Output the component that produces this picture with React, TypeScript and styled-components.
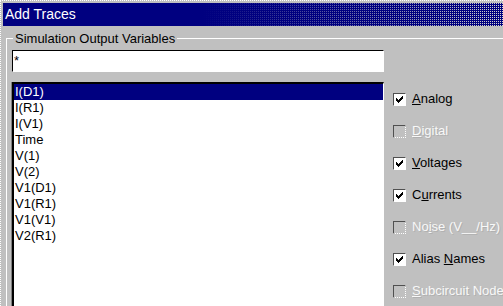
import React from 'react'
import styled, { createGlobalStyle } from 'styled-components';

const GlobalStyle = createGlobalStyle`
    html, body {
        margin: 0;
        background: #c0c0c0;
        overflow: hidden;
    }
`

const Window = styled.div`
    box-sizing: border-box;
    width: 503px;
    height: 306px;
    overflow: hidden;
    border-top: 1px dotted #ffffff;
    border-left: 1px dotted #ffffff;
    padding: 2px 0 0 2px;
    background: #c0c0c0;
    font-family: "Liberation Sans", Arial, sans-serif;
`

// navy caption fading into a dithered dot pattern on the right
const TitleBar = styled.div`
    height: 23px;
    line-height: 23px;
    padding-left: 2px;
    font-size: 14px;
    color: #ffffff;
    white-space: nowrap;
    background-color: #000080;
    background-image:
        linear-gradient(to right, #000080 40%, rgba(0, 0, 128, 0.05) 100%),
        repeating-linear-gradient(to bottom, rgba(0, 0, 128, 0) 0px, rgba(0, 0, 128, 0) 1px, #000080 1px, #000080 2px),
        repeating-linear-gradient(to right, #000080 0px, #000080 1px, #e6e6d2 1px, #e6e6d2 2px);
`

const Group = styled.fieldset`
    margin: 5px 0 0 3px;
    padding: 4px 0 0 5px;
    min-inline-size: 0;
    border: 0;
    border-top: 1px solid #ffffff;
    border-left: 1px solid #ffffff;
`

const GroupLabel = styled.legend`
    margin-left: 1px;
    padding: 0 2px;
    font-size: 13px;
    line-height: 15px;
    color: #000000;
`

const Columns = styled.div`
    display: flex;
`

const LeftColumn = styled.div`
    display: flex;
    flex-direction: column;
    width: 372px;
    flex-shrink: 0;
`

const FilterInput = styled.input`
    box-sizing: border-box;
    width: 372px;
    height: 22px;
    margin: 0;
    padding: 0 0 2px 1px;
    border: 0;
    border-top: 1px solid #000000;
    border-left: 1px solid #000000;
    border-right: 1px dotted #ffffff;
    border-bottom: 1px dotted #ffffff;
    background: #ffffff;
    font-family: inherit;
    font-size: 13px;
    color: #000000;
    outline: none;
`

const VarList = styled.ul`
    box-sizing: border-box;
    list-style: none;
    margin: 10px 0 0;
    padding: 0;
    height: 240px;
    background: #ffffff;
    border-top: 2px solid #000000;
    border-left: 2px solid #000000;
    border-right: 1px dotted #ffffff;
    box-shadow: -1px 0 0 #808080;
`

const VarItem = styled.li<{ $selected?: boolean }>`
    height: 16px;
    line-height: 16px;
    padding-left: 1px;
    font-size: 13px;
    white-space: nowrap;
    background: ${p => p.$selected ? '#000080' : 'transparent'};
    color: ${p => p.$selected ? '#ffffff' : '#000000'};
`

const OptionColumn = styled.div`
    display: flex;
    flex-direction: column;
    padding: 32px 0 0 9px;
`

const OptionRow = styled.label<{ $disabled?: boolean }>`
    display: flex;
    align-items: center;
    gap: 6px;
    height: 32px;
    font-size: 13px;
    white-space: nowrap;
    color: ${p => p.$disabled ? '#f8f8f8' : '#000000'};
    text-shadow: ${p => p.$disabled ? '1px 1px 0 #b0b0b0' : 'none'};
`

const Box = styled.span<{ $disabled?: boolean }>`
    box-sizing: border-box;
    display: flex;
    align-items: center;
    justify-content: center;
    width: 13px;
    height: 13px;
    flex-shrink: 0;
    margin-top: 2px;
    background: ${p => p.$disabled ? '#c0c0c0' : '#ffffff'};
    border-top: 1px solid #505050;
    border-left: 1px solid #505050;
    border-right: 1px dotted #ffffff;
    border-bottom: 1px dotted #ffffff;
`

const variables = ['I(D1)', 'I(R1)', 'I(V1)', 'Time', 'V(1)', 'V(2)', 'V1(D1)', 'V1(R1)', 'V1(V1)', 'V2(R1)'];

// [before, access key, after, checked, disabled]
const options: [string, string, string, boolean, boolean][] = [
    ['', 'A', 'nalog', true, false],
    ['', 'D', 'igital', false, true],
    ['', 'V', 'oltages', true, false],
    ['C', 'u', 'rrents', true, false],
    ['No', 'i', 'se (V__/Hz)', false, true],
    ['Alias ', 'N', 'ames', true, false],
    ['', 'S', 'ubcircuit Nodes', false, true],
];

function Check() {
    return (
        <svg width="7" height="7" viewBox="0 0 7 7" shapeRendering="crispEdges">
            <path d="M0 2 L2 4 L6 0 L7 0 L7 3 L2 7 L0 5 Z" fill="#000000" />
        </svg>
    )
}

export default function App() {
    return (
        <>
            <GlobalStyle />
            <Window>
                <TitleBar>Add Traces</TitleBar>
                <Group>
                    <GroupLabel>Simulation Output Variables</GroupLabel>
                    <Columns>
                        <LeftColumn>
                            <FilterInput readOnly defaultValue="*" />
                            <VarList>
                                {variables.map((v, i) => <VarItem key={v} $selected={i === 0}>{v}</VarItem>)}
                            </VarList>
                        </LeftColumn>
                        <OptionColumn>
                            {options.map(([pre, key, post, checked, disabled]) =>
                                <OptionRow key={pre + key + post} $disabled={disabled}>
                                    <Box $disabled={disabled}>{checked && <Check />}</Box>
                                    <span>{pre}<u>{key}</u>{post}</span>
                                </OptionRow>
                            )}
                        </OptionColumn>
                    </Columns>
                </Group>
            </Window>
        </>
    )
}
